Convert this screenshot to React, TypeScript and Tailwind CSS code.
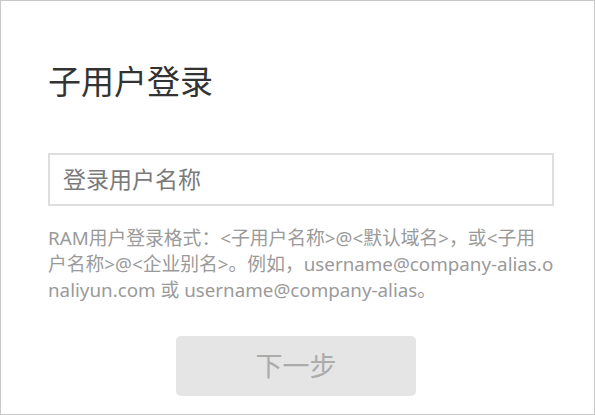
import React from "react";

const font = {
  fontFamily: '"Noto Sans", "Noto Sans CJK SC", sans-serif',
};

export default function App() {
  return (
    <div
      className="w-[595px] h-[415px] border border-[#c8c8c8] bg-white overflow-hidden"
      style={font}
    >
      <div className="pl-[47px] pt-[61px] flex flex-col">
        <h1 className="text-[33px] leading-[40px] text-[#333333] font-normal whitespace-nowrap">
          子用户登录
        </h1>
        <div className="mt-[51px] w-[506px] h-[53px] border-2 border-[#dedede] flex items-center pl-[13px]">
          <input
            className="w-full outline-none text-[23px] text-[#555] placeholder:text-[#7a7a7a] bg-transparent"
            placeholder="登录用户名称"
            style={font}
          />
        </div>
        <div className="mt-[19px] text-[18.8px] leading-[26px] text-[#9a9a9a] whitespace-nowrap">
          <div>RAM用户登录格式：&lt;子用户名称&gt;@&lt;默认域名&gt;，或&lt;子用</div>
          <div>户名称&gt;@&lt;企业别名&gt;。例如，username@company-alias.o</div>
          <div>naliyun.com 或 username@company-alias。</div>
        </div>
        <div className="mt-[33px] ml-[128px]">
          <button className="w-[240px] h-[60px] rounded-[5px] bg-[#e5e5e5] text-[27px] text-[#ababab] flex items-center justify-center">
            下一步
          </button>
        </div>
      </div>
    </div>
  );
}
